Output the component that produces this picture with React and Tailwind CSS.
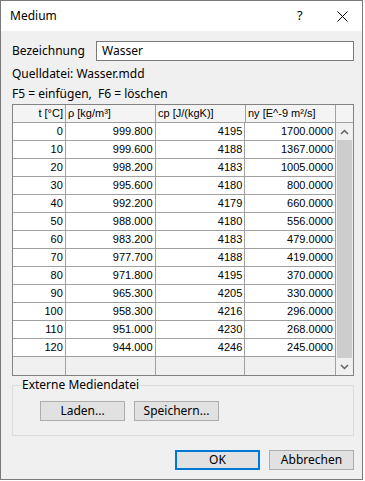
import React from 'react';

const rows = [
  ['0', '999.800', '4195', '1700.0000'],
  ['10', '999.600', '4188', '1367.0000'],
  ['20', '998.200', '4183', '1005.0000'],
  ['30', '995.600', '4180', '800.0000'],
  ['40', '992.200', '4179', '660.0000'],
  ['50', '988.000', '4180', '556.0000'],
  ['60', '983.200', '4183', '479.0000'],
  ['70', '977.700', '4188', '419.0000'],
  ['80', '971.800', '4195', '370.0000'],
  ['90', '965.300', '4205', '330.0000'],
  ['100', '958.300', '4216', '296.0000'],
  ['110', '951.000', '4230', '268.0000'],
  ['120', '944.000', '4246', '245.0000'],
];

const uiFont = { fontFamily: '"Segoe UI", "Noto Sans", sans-serif' };
const gridFont = { fontFamily: '"Liberation Sans", Arial, sans-serif' };

const Cell = ({ w, children, left, last }) => (
  <div
    className={`h-full ${w} flex items-center px-[2px] ${left ? 'justify-start' : 'justify-end'} ${last ? '' : 'border-r border-[#a0a0a0]'}`}
  >
    {children}
  </div>
);

const Chevron = ({ down }) => (
  <svg width="9" height="6" viewBox="0 0 9 6">
    <path
      d={down ? 'M1 1 L4.5 4.5 L8 1' : 'M1 5 L4.5 1.5 L8 5'}
      fill="none"
      stroke="#606060"
      strokeWidth="1.5"
    />
  </svg>
);

const WinButton = ({ children, primary, className = '' }) => (
  <div
    className={`h-[20px] w-[85px] flex items-center justify-center bg-[#e1e1e1] text-[12px] text-black ${primary ? 'border-2 border-[#0078d7]' : 'border border-[#adadad]'} ${className}`}
  >
    {children}
  </div>
);

export default function App() {
  return (
    <div className="w-[365px] h-[481px] bg-white" style={uiFont}>
      <div className="w-[363px] h-[480px] border border-[#7a7a7a] flex flex-col">
        {/* Title bar */}
        <div className="h-[30px] bg-white flex items-center pl-[9px] pr-[14px] text-[12px] text-black">
          <span className="flex-1">Medium</span>
          <span className="w-[10px] text-[13px] mr-[30px]">?</span>
          <svg width="11" height="11" viewBox="0 0 11 11">
            <path d="M0.5 0.5 L10.5 10.5 M10.5 0.5 L0.5 10.5" stroke="#000" strokeWidth="1" />
          </svg>
        </div>

        {/* Body */}
        <div className="flex-1 bg-[#f0f0f0] pl-[11px] pt-[10px] text-[12px] text-black">
          <div className="flex items-center h-[20px]">
            <span className="w-[84px]">Bezeichnung</span>
            <div className="w-[258px] h-[20px] bg-white border border-[#7a7a7a] flex items-center pl-[5px]">
              Wasser
            </div>
          </div>
          <div className="mt-[5px] h-[15px] flex items-center">Quelldatei: Wasser.mdd</div>
          <div className="mt-[5px] h-[15px] flex items-center">F5 = einfügen,&nbsp; F6 = löschen</div>

          {/* Grid */}
          <div className="mt-[3px] w-[342px] border border-[#828282] bg-white text-[11px]" style={gridFont}>
            <div className="flex h-[18px] bg-[#f4f4f4] border-b border-[#a0a0a0]">
              <Cell w="w-[53px]">t [°C]</Cell>
              <Cell w="w-[90px]" left>ρ [kg/m³]</Cell>
              <Cell w="w-[90px]" left>cp [J/(kgK)]</Cell>
              <Cell w="w-[90px]" left>ny [E^-9 m²/s]</Cell>
              <div className="flex-1" />
            </div>
            <div className="flex">
              <div className="w-[323px] border-r border-[#a0a0a0]">
                {rows.map((r) => (
                  <div key={r[0]} className="flex h-[18px] border-b border-[#a0a0a0]">
                    <Cell w="w-[53px]">{r[0]}</Cell>
                    <Cell w="w-[90px]">{r[1]}</Cell>
                    <Cell w="w-[90px]">{r[2]}</Cell>
                    <Cell w="w-[90px]" last>{r[3]}</Cell>
                  </div>
                ))}
                <div className="flex h-[18px] bg-[#f0f0f0]">
                  <Cell w="w-[53px]" />
                  <Cell w="w-[90px]" />
                  <Cell w="w-[90px]" />
                  <Cell w="w-[90px]" last />
                </div>
              </div>
              {/* Scrollbar */}
              <div className="flex-1 bg-[#f0f0f0] flex flex-col items-center">
                <div className="h-[17px] w-full flex items-center justify-center">
                  <Chevron />
                </div>
                <div className="flex-1 w-[15px] bg-[#cdcdcd]" />
                <div className="h-[17px] w-full flex items-center justify-center">
                  <Chevron down />
                </div>
              </div>
            </div>
          </div>

          {/* Group box */}
          <div className="relative mt-[9px] w-[342px] h-[51px] border border-[#dcdcdc]">
            <span className="absolute left-[8px] -top-[9px] bg-[#f0f0f0] px-[1px] leading-[16px]">
              Externe Mediendatei
            </span>
            <div className="flex gap-[9px] pl-[27px] pt-[15px]">
              <WinButton>Laden...</WinButton>
              <WinButton>Speichern...</WinButton>
            </div>
          </div>

          <div className="flex gap-[9px] pl-[163px] mt-[14px]">
            <WinButton primary>OK</WinButton>
            <WinButton>Abbrechen</WinButton>
          </div>
        </div>
      </div>
    </div>
  );
}
